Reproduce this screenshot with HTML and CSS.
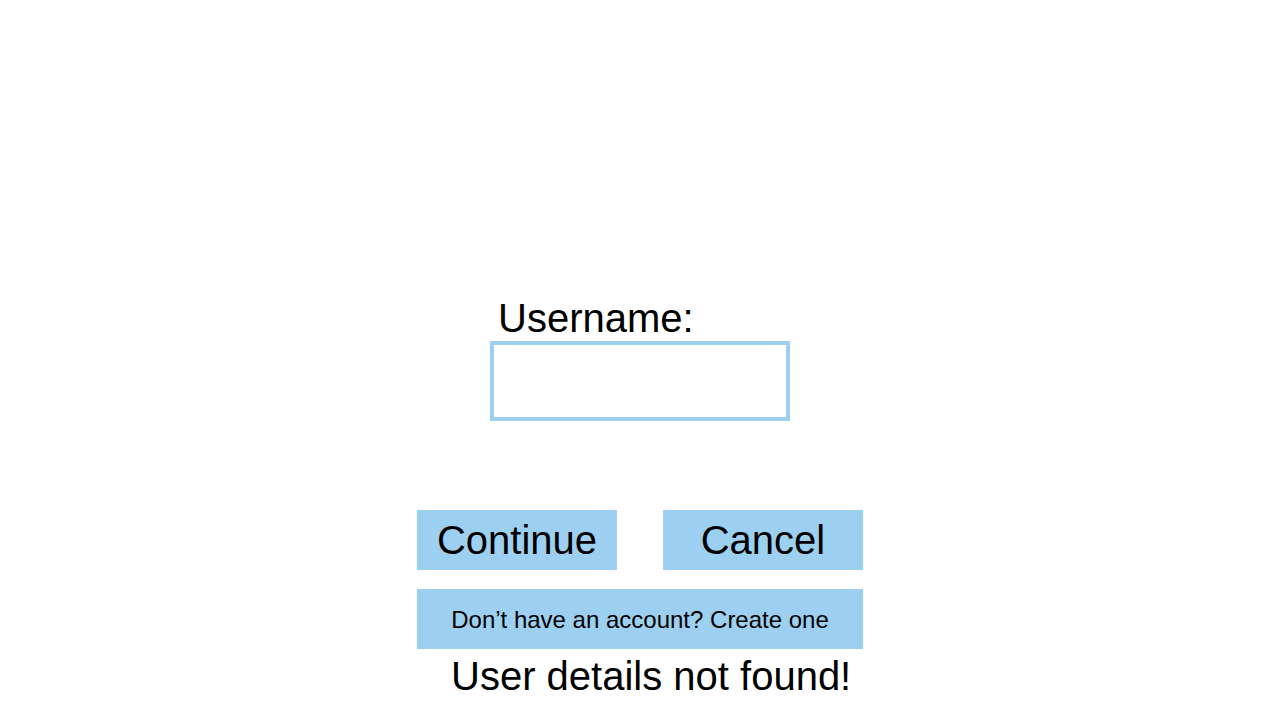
FILE: index.html
```html
<!DOCTYPE html>
<html>
<head>
<meta charset="utf-8">
<link rel="stylesheet" href="styles.css">
</head>
<body>
<main class="page">
  <div class="panel">
    <div class="field">
      <label class="label" for="username">Username:</label>
      <input class="input" id="username" type="text">
    </div>
    <div class="actions">
      <button class="btn btn-big">Continue</button>
      <button class="btn btn-big">Cancel</button>
    </div>
    <button class="btn btn-wide">Don’t have an account? Create one</button>
    <p class="error">User details not found!</p>
  </div>
</main>
</body>
</html>
```
FILE: styles.css
```css
html, body {
  margin: 0;
  padding: 0;
  background: #ffffff;
}
body {
  font-family: "Liberation Sans", Arial, sans-serif;
  color: #000;
}
.page {
  display: flex;
  justify-content: center;
  padding-top: 298px;
}
.panel {
  width: 446px;
  display: flex;
  flex-direction: column;
  align-items: center;
}
.field {
  width: 300px;
  display: flex;
  flex-direction: column;
}
.label {
  font-size: 40px;
  line-height: 40px;
  padding-left: 8px;
  margin-bottom: 3px;
}
.input {
  box-sizing: border-box;
  width: 300px;
  height: 80px;
  margin: 0;
  border: 4px solid #9dd0f0;
  background: #fff;
  outline: none;
  padding: 0 8px;
  font-family: inherit;
  font-size: 24px;
}
.actions {
  width: 446px;
  display: flex;
  justify-content: space-between;
  margin-top: 89px;
}
.btn {
  box-sizing: border-box;
  border: none;
  margin: 0;
  padding: 0;
  background: #9dd0f0;
  color: #000;
  font-family: "Liberation Sans", Arial, sans-serif;
  height: 60px;
  text-align: center;
}
.btn-big {
  width: 200px;
  font-size: 40px;
  line-height: 60px;
}
.btn-wide {
  width: 446px;
  margin-top: 19px;
  font-size: 24px;
  line-height: 60px;
  padding-top: 1px;
}
.error {
  align-self: stretch;
  margin: 7px 0 0 0;
  padding-left: 34px;
  font-size: 40px;
  line-height: 40px;
}
```
